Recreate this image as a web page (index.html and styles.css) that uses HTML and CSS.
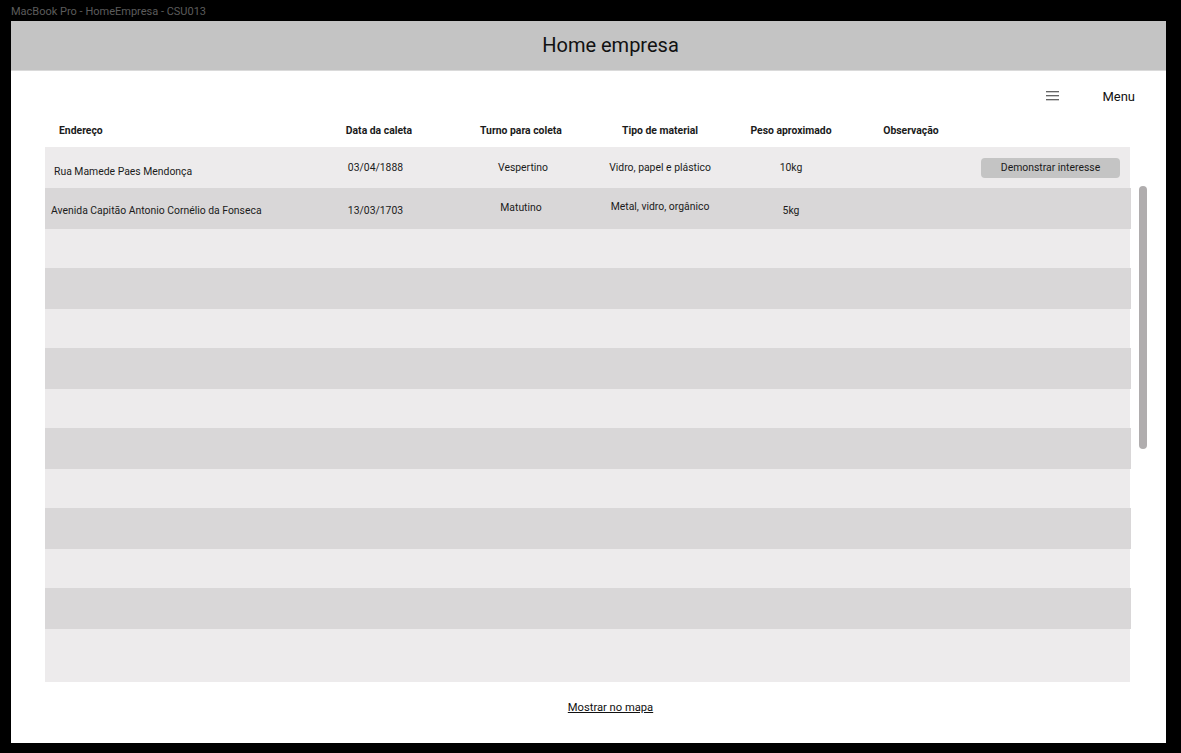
FILE: index.html
```html
<!DOCTYPE html>
<html lang="pt">
<head>
<meta charset="utf-8">
<title>HomeEmpresa</title>
<link rel="stylesheet" href="styles.css">
</head>
<body>
<div class="window-title">MacBook Pro - HomeEmpresa - CSU013</div>
<div class="frame">
  <header class="topbar">Home empresa</header>
  <div class="menubar">
    <svg class="burger" width="13" height="10" viewBox="0 0 13 10" aria-hidden="true">
      <path d="M0 0.75H13M0 4.75H13M0 8.75H13" stroke="#333" stroke-width="1.2" fill="none"/>
    </svg>
    <span class="menu-label">Menu</span>
  </div>
  <div class="table">
    <div class="thead">
      <div class="c addr">Endereço</div>
      <div class="c">Data da caleta</div>
      <div class="c">Turno para coleta</div>
      <div class="c">Tipo de material</div>
      <div class="c">Peso aproximado</div>
      <div class="c">Observação</div>
      <div class="c"></div>
    </div>
    <div class="tbody">
      <div class="row light">
        <div class="c addr down4">Rua Mamede Paes Mendonça</div>
        <div class="c date">03/04/1888</div>
        <div class="c shr">Vespertino</div>
        <div class="c mat">Vidro, papel e plástico</div>
        <div class="c">10kg</div>
        <div class="c"></div>
        <div class="c act"><button class="btn">Demonstrar interesse</button></div>
      </div>
      <div class="row dark">
        <div class="c addr first down1">Avenida Capitão Antonio Cornélio da Fonseca</div>
        <div class="c date down1">13/03/1703</div>
        <div class="c up1">Matutino</div>
        <div class="c mat up3">Metal, vidro, orgânico</div>
        <div class="c down1">5kg</div>
        <div class="c"></div>
        <div class="c"></div>
      </div>
      <div class="row light"></div>
      <div class="row dark"></div>
      <div class="row light"></div>
      <div class="row dark"></div>
      <div class="row light"></div>
      <div class="row dark"></div>
      <div class="row light"></div>
      <div class="row dark"></div>
      <div class="row light"></div>
      <div class="row dark"></div>
      <div class="row light last"></div>
      <div class="scrollbar"></div>
    </div>
  </div>
  <div class="footer"><a class="maplink" href="#">Mostrar no mapa</a></div>
</div>
</body>
</html>
```

FILE: styles.css
```css
* { box-sizing: border-box; }
html, body { margin: 0; padding: 0; }
body {
  background: #000;
  width: 1181px;
  height: 753px;
  overflow: hidden;
  font-family: Roboto, "Liberation Sans", Arial, sans-serif;
  color: #1b1b1b;
}
.window-title {
  height: 21px;
  padding: 5px 0 0 11px;
  font-size: 11px;
  line-height: 13px;
  color: #5c5c5c;
}
.frame {
  margin-left: 11px;
  width: 1155px;
  height: 722px;
  background: #fff;
  display: flex;
  flex-direction: column;
}
.topbar {
  height: 50px;
  background: #c4c4c4;
  border-bottom: 1px solid #dadada;
  display: flex;
  align-items: center;
  justify-content: center;
  font-size: 20px;
  color: #111;
  padding-left: 44px;
  padding-bottom: 1px;
}
.menubar {
  height: 48px;
  display: flex;
  align-items: center;
  justify-content: flex-end;
  padding-top: 2px;
  padding-right: 31px;
  gap: 43px;
}
.burger { display: block; margin-top: -1px; }
.menu-label { font-size: 13px; color: #111; }
.table {
  padding-left: 34px;
  width: 1120px;
}
.thead, .row {
  display: grid;
  grid-template-columns: 285px 98px 186px 92px 170px 70px 184px;
}
.thead {
  height: 28px;
  padding-top: 5px;
  font-size: 10.4px;
  font-weight: 700;
  line-height: 13px;
}
.thead .c { text-align: center; }
.thead .c.addr { text-align: left; padding-left: 14px; }
.tbody { position: relative; }
.row {
  font-size: 10.4px;
  line-height: 13px;
  align-items: center;
}
.row .c { text-align: center; white-space: nowrap; }
.row .c.addr { text-align: left; padding-left: 9px; }
.row .c.addr.first { padding-left: 6px; }
.row .c.date { padding-right: 7px; }
.row .c.mat { margin: 0 -14px; }
.row .c.shr { padding-left: 4px; }
.row.light { background: #edebec; height: 39px; width: 1085px; }
.row.dark { background: #d9d7d8; height: 41px; width: 1086px; }
.row:first-child { height: 41px; }
.row.last { height: 53px; }
.down4 { padding-top: 8px; }
.down1 { padding-top: 3px; }
.up1 { padding-bottom: 2px; }
.up3 { padding-bottom: 5px; }
.c.act { text-align: left; padding-left: 35px; }
.btn {
  width: 139px;
  height: 20px;
  border: none;
  border-radius: 4px;
  background: #c4c4c4;
  font-family: inherit;
  font-size: 10.4px;
  color: #1b1b1b;
  padding: 0;
  cursor: pointer;
}
.scrollbar {
  position: absolute;
  left: 1094px;
  top: 39px;
  width: 8px;
  height: 263px;
  border-radius: 4px;
  background: #b0adae;
}
.footer {
  display: flex;
  justify-content: center;
  padding-top: 19px;
  padding-left: 44px;
}
.maplink {
  font-size: 11.2px;
  color: #111;
  text-decoration: underline;
}
```
